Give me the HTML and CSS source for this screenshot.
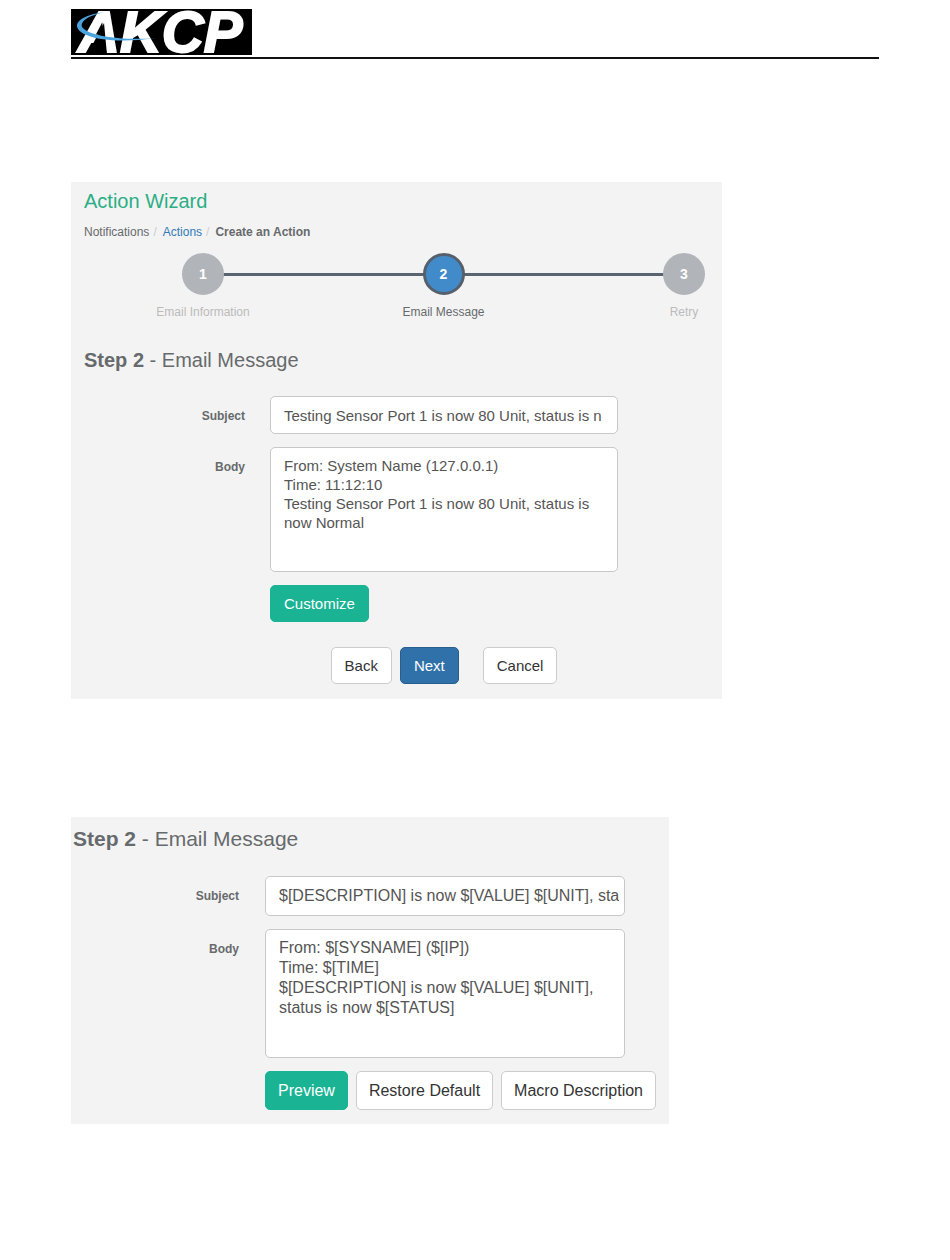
FILE: index.html
```html
<!DOCTYPE html>
<html lang="en">
<head>
    <meta charset="UTF-8">
    <meta name="viewport" content="width=device-width, initial-scale=1.0">
    <title>Action Wizard</title>
    <link rel="stylesheet" href="styles.css">
</head>
<body>
    <header class="page-header">
        <svg class="logo" width="181" height="46" viewBox="0 0 181 46" role="img" aria-label="AKCP">
            <rect width="181" height="46" fill="#000"/>
            <text class="logo-text" x="7" y="43">AKCP</text>
            <!-- open the A -->
            <path d="M33 14 L36 46 L16 46 Z" fill="#000"/>
            <!-- swoosh -->
            <path d="M34 3 C18 5 6 10 6 17 C7 27 34 36 86 29 C52 32 17 27 11 18 C9 11 20 6 34 3 Z" fill="#4aa3dc"/>
        </svg>
    </header>

    <main>
        <!-- Step 2 with the message preview -->
        <section class="panel">
            <h1>Action Wizard</h1>
            <nav class="breadcrumb">
                <span>Notifications</span>
                <span class="slash">/</span>
                <a href="#">Actions</a>
                <span class="slash">/</span>
                <strong>Create an Action</strong>
            </nav>
            <ol class="steps">
                <li><span class="circle">1</span><span class="step-label">Email Information</span></li>
                <li class="active"><span class="circle">2</span><span class="step-label">Email Message</span></li>
                <li><span class="circle">3</span><span class="step-label">Retry</span></li>
            </ol>
            <h2><strong>Step 2</strong> - Email Message</h2>
            <form class="message-form">
                <label for="subject">Subject</label>
                <input type="text" id="subject" value="Testing Sensor Port 1 is now 80 Unit, status is now Normal">
                <label for="body">Body</label>
                <textarea id="body">From: System Name (127.0.0.1)
Time: 11:12:10
Testing Sensor Port 1 is now 80 Unit, status is now Normal</textarea>
                <div class="buttons">
                    <button type="button" class="button green">Customize</button>
                </div>
                <div class="buttons wizard-buttons">
                    <button type="button" class="button">Back</button>
                    <button type="button" class="button blue">Next</button>
                    <button type="button" class="button cancel">Cancel</button>
                </div>
            </form>
        </section>

        <!-- Step 2 with the macros -->
        <section class="panel macro-panel">
            <h2><strong>Step 2</strong> - Email Message</h2>
            <form class="message-form">
                <label for="macroSubject">Subject</label>
                <input type="text" id="macroSubject" value="$[DESCRIPTION] is now $[VALUE] $[UNIT], status is now $[STATUS]">
                <label for="macroBody">Body</label>
                <textarea id="macroBody">From: $[SYSNAME] ($[IP])
Time: $[TIME]
$[DESCRIPTION] is now $[VALUE] $[UNIT], status is now $[STATUS]</textarea>
                <div class="buttons">
                    <button type="button" class="button green">Preview</button>
                    <button type="button" class="button">Restore Default</button>
                    <button type="button" class="button">Macro Description</button>
                </div>
            </form>
        </section>
    </main>
</body>
</html>
```
FILE: styles.css
```css
* {
    box-sizing: border-box;
}
body {
    margin: 0;
    padding: 0 71px;
    background-color: #fff;
    font-family: "Liberation Sans", Arial, Helvetica, sans-serif;
    font-size: 12px;
    line-height: 16px;
    color: #676a6c;
}
.page-header {
    padding: 9px 0 2px;
    border-bottom: 2px solid #111;
}
.logo {
    display: block;
    overflow: visible;
}
.logo-text {
    font-size: 58px;
    font-weight: bold;
    font-style: italic;
    fill: #fff;
    stroke: #fff;
    stroke-width: 2px;
}
.panel {
    max-width: 651px;
    margin-top: 123px;
    padding: 7px 17px 15px 13px;
    background-color: #f3f3f3;
}
h1,
h2 {
    margin: 0;
    font-size: 20px;
    font-weight: normal;
    line-height: 24px;
}
h1 {
    color: #2aae85;
}
.breadcrumb {
    display: flex;
    gap: 4px;
    margin-top: 11px;
}
.breadcrumb a {
    margin-left: 2px;
    color: #337ab7;
    text-decoration: none;
}
.breadcrumb strong {
    margin-left: 2px;
}
.slash {
    color: #ccc;
}

/* Wizard steps */
.steps {
    position: relative;
    display: flex;
    justify-content: space-between;
    margin: 13px 0 28px;
    padding: 0 0 0 98px;
    list-style: none;
}
.steps::before {
    content: "";
    position: absolute;
    top: 20px;
    left: 120px;
    right: 20px;
    height: 3px;
    background-color: #5a6370;
}
.steps li {
    position: relative;
    display: flex;
    flex-direction: column;
    align-items: center;
    width: 42px;
    color: #bbb;
}
.circle {
    width: 42px;
    height: 42px;
    border: 3px solid #b1b5ba;
    border-radius: 50%;
    background-color: #b1b5ba;
    color: #fff;
    font-size: 14px;
    font-weight: bold;
    line-height: 36px;
    text-align: center;
}
.step-label {
    margin-top: 9px;
    white-space: nowrap;
}
.steps .active {
    color: #676a6c;
}
.active .circle {
    border-color: #55606c;
    background-color: #428bca;
}

/* Message form */
.message-form {
    display: grid;
    grid-template-columns: 161px minmax(0, 348px);
    gap: 13px 25px;
    margin-top: 24px;
}
.message-form label {
    padding-top: 12px;
    font-weight: bold;
    text-align: right;
}
.message-form input,
.message-form textarea {
    display: block;
    width: 100%;
    height: 38px;
    margin: 0;
    padding: 0 16px 0 13px;
    border: 1px solid #c8c8c8;
    border-radius: 5px;
    background-color: #fff;
    color: #555;
    font-family: inherit;
    font-size: 15px;
    line-height: 19px;
}
.message-form textarea {
    height: 125px;
    padding: 8px 13px;
    overflow: hidden;
    resize: none;
}
.buttons {
    grid-column: 2;
    display: flex;
    gap: 8px;
}
.wizard-buttons {
    justify-content: center;
    margin-top: 12px;
}
.button {
    height: 37px;
    padding: 0 13px;
    border: 1px solid #ccc;
    border-radius: 5px;
    background-color: #fff;
    color: #333;
    font-family: inherit;
    font-size: 15px;
    white-space: nowrap;
    cursor: pointer;
}
.green {
    border-color: #1ab394;
    background-color: #1ab394;
    color: #fff;
}
.blue {
    border-color: #285e8e;
    background-color: #3071a9;
    color: #fff;
}
.cancel {
    margin-left: 16px;
}

/* Macro panel, slightly larger controls */
.macro-panel {
    max-width: 598px;
    margin-top: 118px;
    padding: 10px 0 14px 2px;
}
.macro-panel h2 {
    font-size: 21px;
}
.macro-panel .message-form {
    grid-template-columns: 166px minmax(0, 360px);
    gap: 13px 26px;
    margin-top: 25px;
}
.macro-panel input,
.macro-panel textarea,
.macro-panel .button {
    font-size: 16px;
    line-height: 20px;
}
.macro-panel input {
    height: 40px;
    padding-right: 5px;
}
.macro-panel textarea {
    height: 129px;
}
.macro-panel .button {
    height: 39px;
    padding: 0 12px;
}
```
